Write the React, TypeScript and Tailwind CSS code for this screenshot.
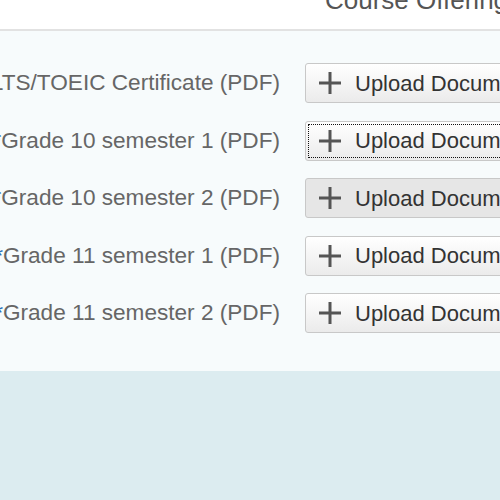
const rows = [
  { label: 'IELTS/TOEIC Certificate (PDF)', star: false, state: 'normal' },
  { label: 'Grade 10 semester 1 (PDF)', star: true, state: 'focus' },
  { label: 'Grade 10 semester 2 (PDF)', star: true, state: 'hover' },
  { label: 'Grade 11 semester 1 (PDF)', star: true, state: 'normal' },
  { label: 'Grade 11 semester 2 (PDF)', star: true, state: 'normal' },
]

function PlusIcon() {
  return (
    <svg width="22" height="22" viewBox="0 0 22 22" className="shrink-0">
      <path d="M11 0v22M0 11h22" stroke="#555" strokeWidth="3" />
    </svg>
  )
}

function UploadButton({ state }: { state: string }) {
  const bg =
    state === 'hover'
      ? 'bg-[#e6e6e6]'
      : 'bg-gradient-to-b from-[#ffffff] to-[#ebebeb]'
  return (
    <button
      className={`relative flex h-10 w-[260px] shrink-0 items-center gap-[14px] rounded-[3px] border border-[#c8c8c8] pl-[13px] text-[22px] text-[#333] ${bg}`}
    >
      {state === 'focus' && (
        <span className="pointer-events-none absolute inset-[2px] border border-dotted border-[#111]" />
      )}
      <PlusIcon />
      <span className="whitespace-nowrap">Upload Document</span>
    </button>
  )
}

export default function App() {
  return (
    <div className="h-[500px] w-[500px] overflow-hidden bg-[#dcecf0] font-['Liberation_Sans',Arial,sans-serif]">
      <div className="h-[31px] overflow-hidden border-b-2 border-[#e2e2e2] bg-white">
        <div className="-mt-[13px] pl-[325px] text-[26px] leading-none whitespace-nowrap text-[#555]">
          Course Offering
        </div>
      </div>

      <div className="flex flex-col gap-[17.5px] bg-[#f7fbfc] pt-[32px] pb-[38px]">
        {rows.map((r) => (
          <div key={r.label} className="flex items-center">
            <div className="flex w-[280px] shrink-0 justify-end">
              <span className="whitespace-nowrap text-[22.6px] text-[#666]">
                {r.star && <span className="text-[#2a6fb8]">*</span>}
                {r.label}
              </span>
            </div>
            <div className="ml-[25px]">
              <UploadButton state={r.state} />
            </div>
          </div>
        ))}
      </div>
    </div>
  )
}
